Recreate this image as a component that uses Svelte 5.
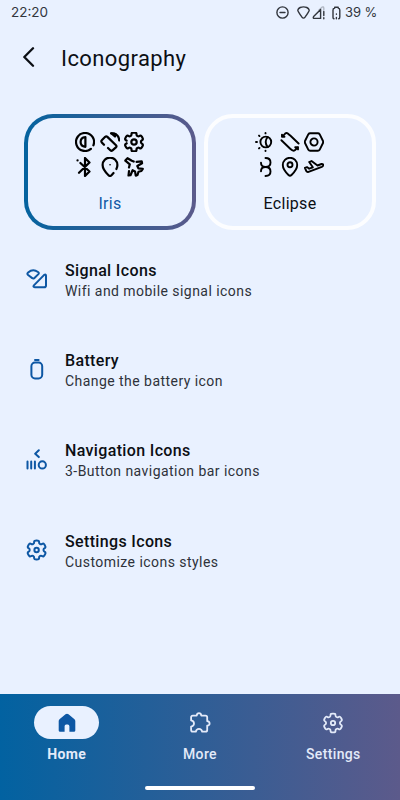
<script>
  function gearPath(c, outer, inner) {
    const pts = [];
    for (let k = 0; k < 6; k++) {
      const a = -90 + k * 60;
      for (const [d, r] of [[-20, inner], [-15, outer], [15, outer], [20, inner]]) {
        const t = ((a + d) * Math.PI) / 180;
        pts.push([c + r * Math.cos(t), c + r * Math.sin(t)]);
      }
    }
    const n = pts.length;
    const mix = (p, q, f) => [p[0] + (q[0] - p[0]) * f, p[1] + (q[1] - p[1]) * f];
    const s = (p) => p.map((v) => v.toFixed(2)).join(' ');
    let out = '';
    for (let i = 0; i < n; i++) {
      const p = pts[i];
      const a = mix(p, pts[(i + n - 1) % n], 0.45);
      const b = mix(p, pts[(i + 1) % n], 0.45);
      out += `${i ? 'L' : 'M'}${s(a)}Q${s(p)} ${s(b)}`;
    }
    return out + 'Z';
  }
  const gear = gearPath(10, 9.8, 7);

  const rows = [
    { icon: 'signal', title: 'Signal Icons', text: 'Wifi and mobile signal icons' },
    { icon: 'battery', title: 'Battery', text: 'Change the battery icon' },
    { icon: 'nav', title: 'Navigation Icons', text: '3-Button navigation bar icons' },
    { icon: 'gear', title: 'Settings Icons', text: 'Customize icons styles' }
  ];
</script>

<div class="screen">
  <header class="status">
    <span class="time">22:20</span>
    <svg class="dnd" width="13" height="13" viewBox="0 0 13 13"><circle cx="6.5" cy="6.5" r="5.6" /><path d="M4 6.5h5" /></svg>
    <svg class="wifi" width="13" height="13" viewBox="0 0 13 13"><path d="M.8 4.2Q1.2 2.5 3.2 1.5Q6.5.2 9.8 1.5Q11.8 2.5 12.2 4.2Q12.3 5.2 8 11.2Q6.5 13 5 11.2Q.7 5.2.8 4.2Z" /></svg>
    <svg class="cell" width="15" height="14" viewBox="0 0 15 14"><path class="faint" d="M7 4L10 1.2Q11.5.3 11.8 2V4" /><path d="M8.6 3.5L1.6 10.6Q.6 12.4 2.4 12.4H8.6Z" /><path d="M11.8 5.5v4M11.8 11.8v1" /></svg>
    <svg class="bat" width="9" height="14" viewBox="0 0 9 14"><path d="M2 12.8Q1 12.8 1 11V4Q1 2.3 2.7 2V1.2H6.2V2Q7.8 2.3 7.8 4V11Q7.8 12.8 6.7 12.8" /><path d="M4.4 8v.2M4.4 11.4v1.4" /></svg>
    <span class="pct">39 %</span>
  </header>

  <div class="bar">
    <svg width="14" height="20" viewBox="0 0 14 20"><path d="M11 1.3L2.3 10L11 18.7" /></svg>
    <h1>Iconography</h1>
  </div>

  <div class="cards">
    <div class="card selected">
      <div class="set bold">
        <svg viewBox="0 0 20 20"><path d="M15.9 16.8A9 9 0 1 1 18.4 13.3" /><path d="M10.4 5.2V14.8Q5.6 14.4 5.6 10Q5.6 5.6 10.4 5.2Z" /></svg>
        <svg viewBox="0 0 20 20"><path d="M4 12.8L1.8 10.4Q.8 9.2 2 8L5.2 4.8Q6.3 3.9 7.4 4.9L16 13.2Q17 14.3 15.9 15.4L12.5 18.4Q11.4 19.2 10.3 18.2L8 16" /><path d="M11 1.3L14.3 1.5Q19 3.2 19.2 8.5" /><path d="M11.5 1.4L15.6 2L15 4.4Z" class="solid" /></svg>
        <svg viewBox="0 0 20 20"><path d={gear} stroke-dasharray="54 2.8" /><circle cx="10" cy="10" r="2.7" /></svg>
        <svg viewBox="0 0 20 20"><path d="M5.4 6L14.5 14.5L10 19V1L14.5 5.5L4 15.8" /><path d="M2.5 3.4h.1" /></svg>
        <svg viewBox="0 0 20 20"><path d="M13.5 16L11.5 18.2Q10 19.6 8.5 18.2Q2.6 12.5 2.6 8A7.3 7.3 0 0 1 17.4 8Q17.4 10 16.4 12" /><path d="M10 7.7h.1" class="dot" /></svg>
        <svg viewBox="0 0 20 20"><path d="M5 10.5L5.8 7.3L1.3 3.6L3.5 1.2L7.8 3.8L9.7 4.6M12.6 4.8L17.7 4.3L18.1 6.2L13.3 9L14.4 11.4L18.8 11.8L17.4 14L14.5 14.7L13.5 18L11.8 18.7L11 14.4L8.6 13.2L6.5 18.2L4.5 18.5L5 14" /></svg>
      </div>
      <span>Iris</span>
    </div>
    <div class="card">
      <div class="set">
        <svg viewBox="0 0 20 20"><circle cx="10.8" cy="10" r="5.4" /><path d="M12.6 5Q8.8 10 12.6 15M1 10h1M10.5 1v.4M10.5 18.6v.4M4 3.6l.5.5M4 16.4l.5-.5" /></svg>
        <svg viewBox="0 0 20 20"><path d="M9.5 3L7.8 1.5Q6.5.5 5.2 1.6L2 4.8M2 4.8V2.6M2 4.8H4.5M10 3.2L18.6 11.5M1.4 8.2L10.2 16.8Q13 19.5 14.8 18.3L18 15.2M18 15.2H15.2M18 15.2V17.4" /></svg>
        <svg viewBox="0 0 20 20"><path d="M6.1 1.2H13.9Q15 1.2 15.6 2.2L19 9Q19.4 10 19 11L15.6 17.8Q15 18.8 13.9 18.8H6.1Q5 18.8 4.4 17.8L1 11Q.6 10 1 9L4.4 2.2Q5 1.2 6.1 1.2Z" /><circle cx="10" cy="10" r="3.6" /></svg>
        <svg viewBox="0 0 20 20"><path d="M10.5 1Q15.5 1 15.5 5.5Q15.5 10 10.5 10Q6 10 6 5.8M10.5 19Q15.5 19 15.5 14.5Q15.5 10 10.5 10Q6 10 6 14.2" /></svg>
        <svg viewBox="0 0 20 20"><path d="M8.5 18Q2.8 12.5 2.8 8A7.2 7.2 0 0 1 17.2 8Q17.2 12.5 11.5 18Q10 19.4 8.5 18Z" /><circle cx="10" cy="7.8" r="2.5" /></svg>
        <svg viewBox="0 0 20 20"><path d="M.9 10.8L3 10.1L5.2 11.7L8.8 10.3L5.2 5L7.5 4L13.5 8.5L17.5 7Q19.4 6.7 19.3 8.3Q19 9.3 17.8 9.8L4.5 14.8Q3 15.3 2.3 14Z" /></svg>
      </div>
      <span>Eclipse</span>
    </div>
  </div>

  <main>
    {#each rows as row}
      <section class="row">
        <svg class="lead" width="22" height="22" viewBox="0 0 22 22">
          {#if row.icon === 'signal'}
            <path d="M1.8 6.7Q.9 5.5 2.1 4.5Q7 .3 12 4Q13.4 5 12.4 6.1L8.2 10.2Q7.2 11 6.2 10.1Z" />
            <path d="M18.2 6.9Q20 5.8 20 7.8V17.4Q20 19.2 18.2 19.2H8.8Q6.6 19 7.9 17.4Z" />
          {:else if row.icon === 'battery'}
            <path d="M9 2H12.6" /><rect x="5.4" y="4.6" width="10.8" height="15.8" rx="3.6" />
          {:else if row.icon === 'nav'}
            <path d="M12.8 1.3L9.2 4.7L12.8 8.1M1.5 12.4v7.2M5.2 12.4v7.2M8.9 12.4v7.2" /><circle cx="16.3" cy="15.9" r="3.6" />
          {:else}
            <g transform="translate(.6 1)"><path d={gear} /><circle cx="10" cy="10" r="2.2" /></g>
          {/if}
        </svg>
        <div>
          <h2>{row.title}</h2>
          <p>{row.text}</p>
        </div>
      </section>
    {/each}
  </main>

  <nav>
    <div class="tabs">
      <div class="tab active">
        <i><svg width="22" height="22" viewBox="0 0 22 22"><path d="M11 1.7Q11.8 1.7 12.5 2.3L18.2 6.9Q19.3 7.8 19.3 9V18.4Q19.3 19.8 17.9 19.8H13.4V14.2Q13.4 12.6 11.8 12.6H10.2Q8.6 12.6 8.6 14.2V19.8H4.1Q2.7 19.8 2.7 18.4V9Q2.7 7.8 3.8 6.9L9.5 2.3Q10.2 1.7 11 1.7Z" /></svg></i>
        <span>Home</span>
      </div>
      <div class="tab">
        <i><svg width="22" height="22" viewBox="0 0 22 22"><path d="M3.8 3.6H7.7Q8 1.2 10 1.2Q12 1.2 12.3 3.6H16.5Q18.2 3.6 18.2 5.3V9.2Q20.6 9.5 20.6 11.4Q20.6 13.3 18.2 13.6V18Q18.2 19.7 16.5 19.7H13.2Q12.6 16.8 10 16.8Q7.4 16.8 6.8 19.7H3.8Q2.1 19.7 2.1 18V14.6Q5 14 5 11.5Q5 9 2.1 8.4V5.3Q2.1 3.6 3.8 3.6Z" /></svg></i>
        <span>More</span>
      </div>
      <div class="tab">
        <i><svg width="22" height="22" viewBox="0 0 22 22"><g transform="translate(1 1)"><path d={gear} /><circle cx="10" cy="10" r="2.2" /></g></svg></i>
        <span>Settings</span>
      </div>
    </div>
    <div class="handle"></div>
  </nav>
</div>

<style>
  .screen {
    height: 800px;
    width: 400px;
    background: #e9f1ff;
    color: #0c0f14;
    font-family: Roboto, sans-serif;
    display: flex;
    flex-direction: column;
    overflow: hidden;
  }
  svg {
    fill: none;
    stroke: currentColor;
    stroke-linecap: round;
    stroke-linejoin: round;
    display: block;
    flex: none;
  }
  .status {
    height: 25px;
    padding: 0 23px 0 11px;
    display: flex;
    align-items: center;
    color: #32363d;
    font: 13.5px/25px Inter, sans-serif;
  }
  .status svg { stroke-width: 1.4; }
  .time { flex: 1; }
  .dnd { margin-right: 8px; }
  .wifi { margin-right: 2px; }
  .cell { margin-right: 5px; }
  .faint { opacity: .3; }
  .bat { margin-right: 4px; }
  .pct { width: 32px; white-space: nowrap; font-size: 13px; letter-spacing: -.1px; }
  .bar {
    height: 66px;
    padding-left: 22px;
    display: flex;
    align-items: center;
    gap: 25px;
  }
  .bar svg { stroke-width: 2.3; margin-top: -2px; }
  h1 { margin: 0; font-size: 22px; font-weight: 400; letter-spacing: .4px; }
  .cards { display: flex; gap: 8px; padding: 23px 24px 0; }
  .card {
    box-sizing: border-box;
    flex: 1;
    height: 116px;
    border: 4px solid #fcfdff;
    border-radius: 29px;
    display: flex;
    flex-direction: column;
    align-items: center;
    padding-top: 14px;
  }
  .selected {
    border-color: transparent;
    background: linear-gradient(#e9f1ff, #e9f1ff) padding-box,
      linear-gradient(90deg, #04639f, #5b5a8b) border-box;
  }
  .card > span { font-size: 16px; line-height: 20px; margin-top: 17px; letter-spacing: .3px; }
  .selected > span { color: #1158a5; }
  .set { display: grid; grid-template-columns: repeat(3, 20px); gap: 5px 4.5px; color: #000; margin-right: 1px; }
  .set svg { width: 20px; height: 20px; stroke-width: 1.9; }
  .set.bold svg { stroke-width: 2.2; }
  .solid { fill: currentColor; }
  .dot { stroke-width: 1.6; }
  main { flex: 1; padding: 28px 0 0 26px; }
  .row { display: flex; gap: 17px; height: 90.4px; }
  .lead { color: #0d57a4; stroke-width: 2; margin-top: 10px; }
  h2 { margin: 1.5px 0 0; font-size: 16px; line-height: 21px; font-weight: 500; letter-spacing: .35px; }
  p { margin: 0; font-size: 14px; line-height: 20px; letter-spacing: .45px; color: #2e323a; }
  nav {
    height: 106px;
    background: linear-gradient(90deg, #0262a1, #5c5a8b);
    color: #e3eaf9;
    display: flex;
    flex-direction: column;
    align-items: center;
  }
  .tabs { display: flex; width: 100%; height: 92px; }
  .tab { flex: 1; display: flex; flex-direction: column; align-items: center; padding-top: 12px; }
  .tab i {
    width: 65px;
    height: 33px;
    border-radius: 17px;
    display: flex;
    align-items: center;
    justify-content: center;
  }
  .tab svg { stroke-width: 1.8; }
  .active i { background: #e9f1ff; color: #0d57a4; }
  .active svg { fill: currentColor; stroke: none; }
  .tab span { font-size: 14px; line-height: 20px; font-weight: 500; letter-spacing: .35px; margin-top: 5px; }
  .active span { font-weight: 700; }
  .handle { width: 110px; height: 4px; border-radius: 2px; background: #fff; }
</style>
